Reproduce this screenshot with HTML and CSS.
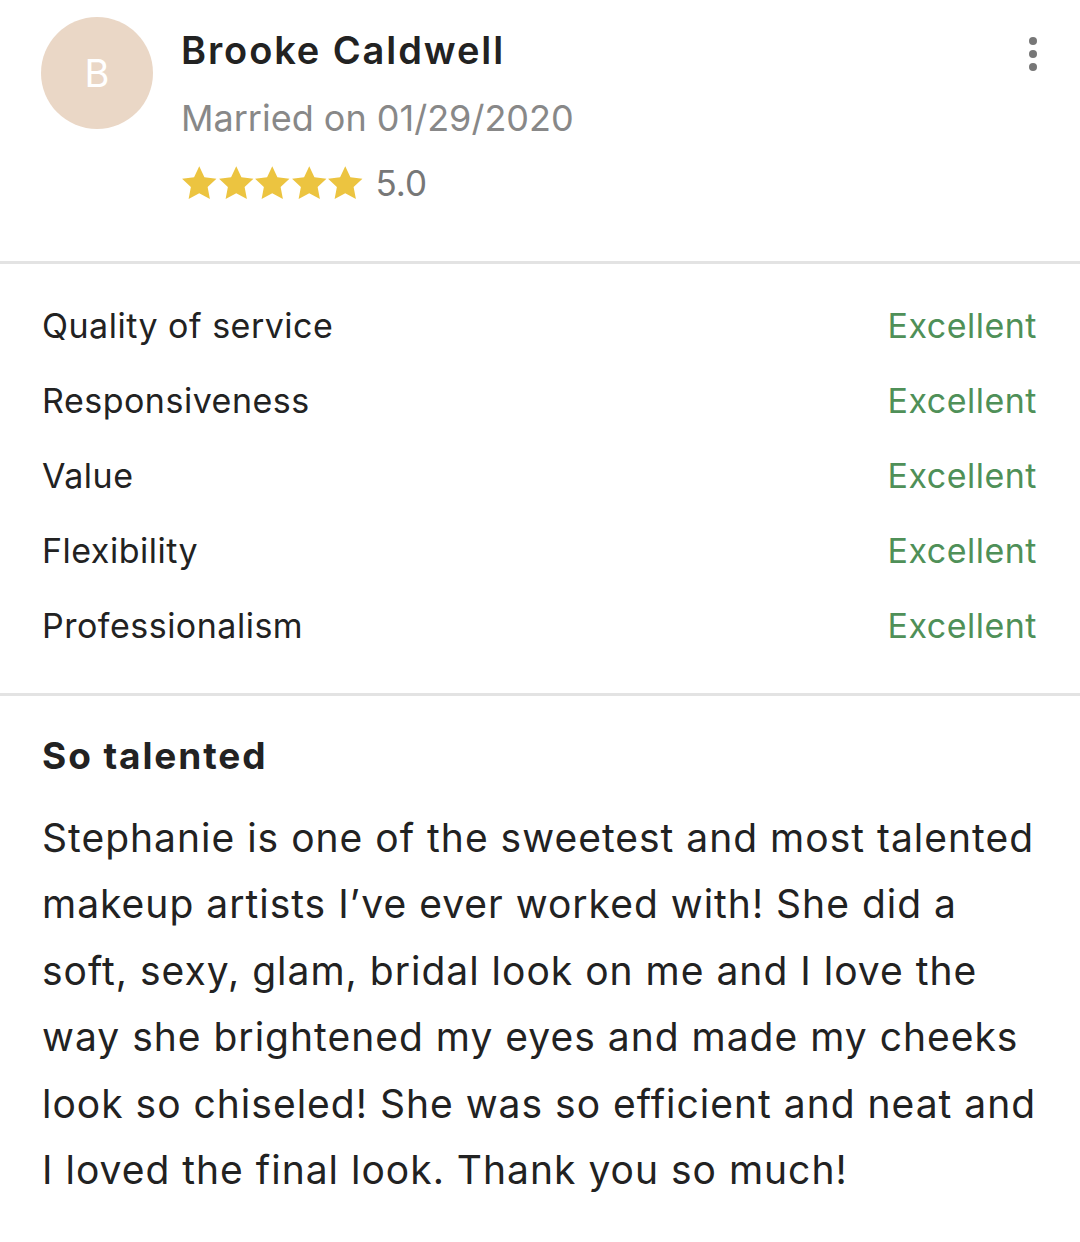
FILE: index.html
```html
<!DOCTYPE html>
<html lang="en">
<head>
<meta charset="utf-8">
<link rel="stylesheet" href="styles.css">
</head>
<body>
<div class="review">
  <header class="head">
    <div class="avatar">B</div>
    <div class="who">
      <div class="name">Brooke Caldwell</div>
      <div class="married">Married on 01/29/2020</div>
      <div class="rating">
        <span class="stars">
          <svg viewBox="0 0 24 24" class="star"><path d="M12 0.8l3.4 7.2 7.9 1-5.8 5.5 1.5 7.8L12 18.5l-7 3.8 1.5-7.8-5.8-5.5 7.9-1z"/></svg>
          <svg viewBox="0 0 24 24" class="star"><path d="M12 0.8l3.4 7.2 7.9 1-5.8 5.5 1.5 7.8L12 18.5l-7 3.8 1.5-7.8-5.8-5.5 7.9-1z"/></svg>
          <svg viewBox="0 0 24 24" class="star"><path d="M12 0.8l3.4 7.2 7.9 1-5.8 5.5 1.5 7.8L12 18.5l-7 3.8 1.5-7.8-5.8-5.5 7.9-1z"/></svg>
          <svg viewBox="0 0 24 24" class="star"><path d="M12 0.8l3.4 7.2 7.9 1-5.8 5.5 1.5 7.8L12 18.5l-7 3.8 1.5-7.8-5.8-5.5 7.9-1z"/></svg>
          <svg viewBox="0 0 24 24" class="star"><path d="M12 0.8l3.4 7.2 7.9 1-5.8 5.5 1.5 7.8L12 18.5l-7 3.8 1.5-7.8-5.8-5.5 7.9-1z"/></svg>
        </span>
        <span class="score">5.0</span>
      </div>
    </div>
    <div class="menu"><span></span><span></span><span></span></div>
  </header>
  <section class="scores">
    <div class="row"><span class="label">Quality of service</span><span class="value">Excellent</span></div>
    <div class="row"><span class="label">Responsiveness</span><span class="value">Excellent</span></div>
    <div class="row"><span class="label">Value</span><span class="value">Excellent</span></div>
    <div class="row"><span class="label">Flexibility</span><span class="value">Excellent</span></div>
    <div class="row"><span class="label">Professionalism</span><span class="value">Excellent</span></div>
  </section>
  <section class="body">
    <h2 class="title">So talented</h2>
    <p class="text">Stephanie is one of the sweetest and most talented makeup artists I’ve ever worked with! She did a soft, sexy, glam, bridal look on me and I love the way she brightened my eyes and made my cheeks look so chiseled! She was so efficient and neat and I loved the final look. Thank you so much!</p>
  </section>
</div>
</body>
</html>
```

FILE: styles.css
```css
html, body {
  margin: 0;
  padding: 0;
  background: #fff;
}
body {
  font-family: Inter, "Open Sans", sans-serif;
  color: #222;
  width: 1080px;
  height: 1242px;
  overflow: hidden;
}
.head {
  display: flex;
  align-items: flex-start;
  padding: 17px 40px 0 41px;
  height: 264px;
  box-sizing: border-box;
  border-bottom: 3px solid #e3e3e3;
}
.avatar {
  width: 112px;
  height: 112px;
  border-radius: 50%;
  background: #ead7c6;
  color: #fff;
  font-size: 38px;
  display: flex;
  align-items: center;
  justify-content: center;
  flex: none;
}
.who {
  margin-left: 28px;
  flex: 1;
}
.name {
  font-size: 38px;
  font-weight: 600;
  letter-spacing: 1.9px;
  color: #222;
  line-height: 48px;
  margin-top: 9px;
}
.married {
  font-size: 36px;
  color: #888;
  line-height: 48px;
  margin-top: 20px;
}
.rating {
  display: flex;
  align-items: center;
  margin-top: 21px;
}
.stars {
  display: flex;
}
.star {
  width: 36.5px;
  height: 36.5px;
  fill: #ecc440;
}
.score {
  font-size: 35px;
  color: #777;
  margin-left: 12px;
  line-height: 40px;
}
.menu {
  display: flex;
  flex-direction: column;
  gap: 5px;
  padding-top: 20px;
  margin-right: 3px;
}
.menu span {
  width: 8px;
  height: 8px;
  border-radius: 50%;
  background: #777;
}
.scores {
  padding: 24px 43px 30px 42px;
  border-bottom: 3px solid #e3e3e3;
}
.row {
  display: flex;
  justify-content: space-between;
  align-items: center;
  height: 75px;
  font-size: 34px;
  letter-spacing: 0.5px;
}
.value {
  color: #4f9058;
}
.body {
  padding: 28px 38px 0 42px;
}
.title {
  font-size: 37px;
  font-weight: 700;
  letter-spacing: 1.9px;
  margin: 0;
  line-height: 64px;
}
.text {
  font-size: 39px;
  letter-spacing: 1px;
  line-height: 66.4px;
  margin: 17px 0 0;
}
```
